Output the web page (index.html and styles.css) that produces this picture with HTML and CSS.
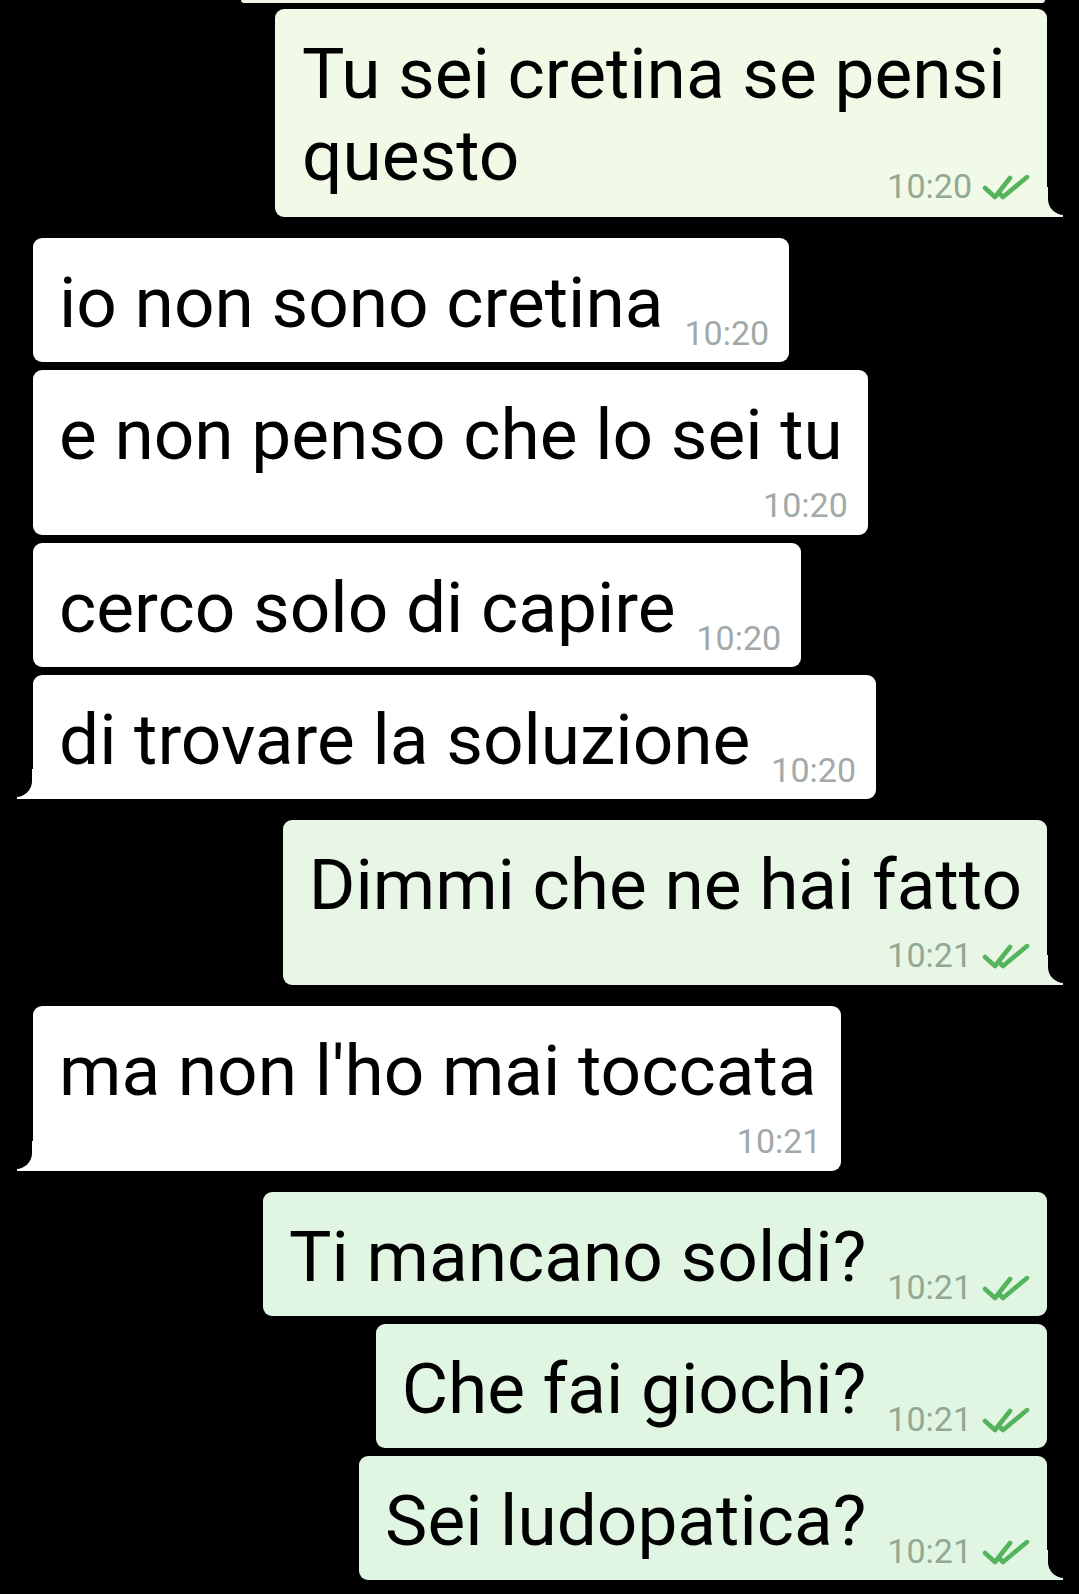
FILE: index.html
```html
<!DOCTYPE html>
<html lang="it">
<head>
<meta charset="utf-8">
<title>Chat</title>
<link rel="stylesheet" href="styles.css">
</head>
<body>
<div class="chat">
  <div class="prev"></div>

  <div class="msg out tone-1 tail-out wide first"><span class="text">Tu sei cretina se pensi questo</span><span class="meta"><span class="time">10:20</span><svg class="ticks" viewBox="0 0 48 26" width="48" height="26"><path d="M3 13 L13 22 L28 3"/><path d="M17 18 L21 22 L45 2"/></svg></span></div>

  <div class="msg in gap"><span class="text">io non sono cretina</span><span class="meta"><span class="time">10:20</span></span></div>

  <div class="msg in stack"><span class="text">e non penso che lo sei tu</span><span class="meta below"><span class="time">10:20</span></span></div>

  <div class="msg in"><span class="text">cerco solo di capire</span><span class="meta"><span class="time">10:20</span></span></div>

  <div class="msg in tail-in"><span class="text">di trovare la soluzione</span><span class="meta"><span class="time">10:20</span></span></div>

  <div class="msg out tone-2 tail-out stack gap"><span class="text">Dimmi che ne hai fatto</span><span class="meta below"><span class="time">10:21</span><svg class="ticks" viewBox="0 0 48 26" width="48" height="26"><path d="M3 13 L13 22 L28 3"/><path d="M17 18 L21 22 L45 2"/></svg></span></div>

  <div class="msg in tail-in stack gap"><span class="text">ma non l'ho mai toccata</span><span class="meta below"><span class="time">10:21</span></span></div>

  <div class="msg out tone-3 gap"><span class="text">Ti mancano soldi?</span><span class="meta"><span class="time">10:21</span><svg class="ticks" viewBox="0 0 48 26" width="48" height="26"><path d="M3 13 L13 22 L28 3"/><path d="M17 18 L21 22 L45 2"/></svg></span></div>

  <div class="msg out tone-3"><span class="text">Che fai giochi?</span><span class="meta"><span class="time">10:21</span><svg class="ticks" viewBox="0 0 48 26" width="48" height="26"><path d="M3 13 L13 22 L28 3"/><path d="M17 18 L21 22 L45 2"/></svg></span></div>

  <div class="msg out tone-3 tail-out"><span class="text">Sei ludopatica?</span><span class="meta"><span class="time">10:21</span><svg class="ticks" viewBox="0 0 48 26" width="48" height="26"><path d="M3 13 L13 22 L28 3"/><path d="M17 18 L21 22 L45 2"/></svg></span></div>
</div>
</body>
</html>
```

FILE: styles.css
```css
html, body {
  margin: 0;
  padding: 0;
  background: #000;
}

body {
  font-family: Roboto, "Noto Sans", "Liberation Sans", sans-serif;
  overflow: hidden;
}

.chat {
  width: 1079px;
  min-height: 1594px;
  box-sizing: border-box;
  padding: 0 32px 0 33px;
  display: flex;
  flex-direction: column;
}

.prev {
  height: 3px;
  margin: 0 2px 0 208px;
  background: #eef5e6;
  border-radius: 0 0 6px 6px;
}

.msg {
  position: relative;
  font-size: 71.2px;
  line-height: 82px;
  color: #000;
  padding: 24px 20px 18px 26px;
  border-radius: 9px;
}

.msg + .msg {
  margin-top: 8px;
}

.msg.gap {
  margin-top: 21px;
}

.msg.first {
  margin-top: 6px;
  padding-bottom: 20px;
  padding-left: 27px;
}

.in {
  align-self: flex-start;
  background: #fff;
}

.out {
  align-self: flex-end;
}

.tone-1 { background: #f1f9e7; }
.tone-2 { background: #e7f6e5; }
.tone-3 { background: #e1f5e3; }

.wide {
  max-width: 772px;
  box-sizing: border-box;
}

.stack {
  padding-right: 25px;
}

.meta {
  float: right;
  margin-left: 21px;
  position: relative;
  top: 55px;
  font-size: 34px;
  line-height: 33px;
  white-space: nowrap;
}

.meta.below {
  float: none;
  display: block;
  position: static;
  text-align: right;
  margin: 0 -5px 0 0;
  height: 28px;
  padding-top: 13px;
}

.in .time { color: #a2a9a9; }
.out .time { color: #93a893; }

.ticks {
  display: inline-block;
  vertical-align: -3px;
  margin-left: 10px;
  margin-right: -3px;
  fill: none;
  stroke: #55b35c;
  stroke-width: 4.6;
  stroke-linecap: round;
  stroke-linejoin: round;
}

/* outgoing tail, bottom right */
.tail-out {
  border-bottom-right-radius: 0;
}
.tail-out::before {
  content: "";
  position: absolute;
  left: calc(100% - 1px);
  bottom: 0;
  width: 17px;
  height: 30px;
  background: inherit;
}
.tail-out::after {
  content: "";
  position: absolute;
  left: calc(100% + 1px);
  bottom: 2px;
  width: 16px;
  height: 29px;
  background: #000;
  border-bottom-left-radius: 16px;
}

/* incoming tail, bottom left */
.tail-in {
  border-bottom-left-radius: 0;
}
.tail-in::before {
  content: "";
  position: absolute;
  right: calc(100% - 1px);
  bottom: 0;
  width: 17px;
  height: 30px;
  background: inherit;
}
.tail-in::after {
  content: "";
  position: absolute;
  right: calc(100% + 1px);
  bottom: 2px;
  width: 16px;
  height: 29px;
  background: #000;
  border-bottom-right-radius: 16px;
}
```
